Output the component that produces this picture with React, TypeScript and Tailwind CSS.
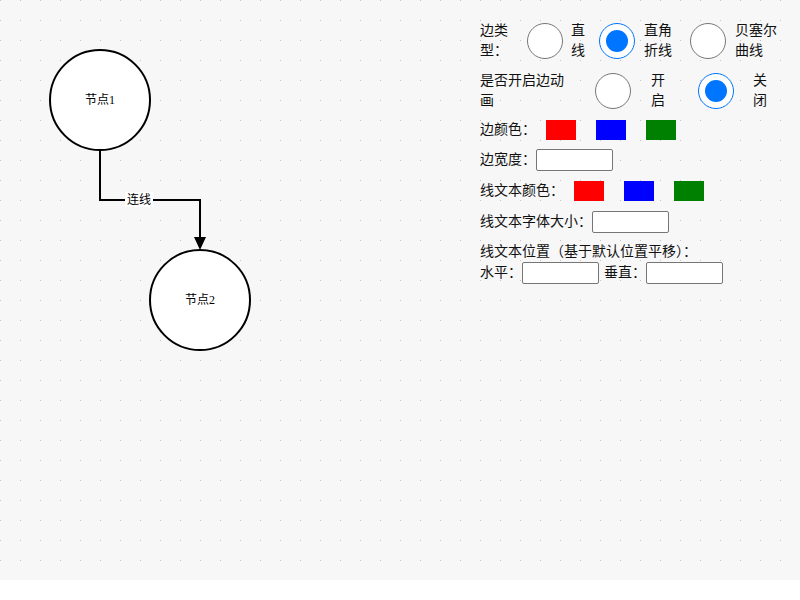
import React, { useState } from "react";

const colors = ["#ff0000", "#0000ff", "#008000"];

const Radio = ({ checked, onClick, className }: { checked: boolean; onClick: () => void; className?: string }) => (
    <div
        onClick={onClick}
        className={
            "w-[36px] h-[36px] shrink-0 rounded-full bg-white flex items-center justify-center cursor-pointer border " +
            (checked ? "border-[#0075ff] " : "border-[#767676] ") +
            (className || "")
        }
    >
        {checked && <div className="w-[22px] h-[22px] rounded-full bg-[#0075ff]"></div>}
    </div>
);

const Swatch = ({ color }: { color: string }) => (
    <div className="w-[30px] h-[20px] mx-[10px] shrink-0" style={{ backgroundColor: color }}></div>
);

const Field = ({ className }: { className?: string }) => (
    <input className={"w-[77px] h-[22px] bg-white border border-[#767676] rounded-[2px] px-1 text-[13px] outline-none " + (className || "")} />
);

const Diagram = () => (
    <svg className="absolute inset-0" width={800} height={580}>
        <defs>
            <pattern id="grid" width="20" height="20" patternUnits="userSpaceOnUse">
                <rect x="0" y="0" width="1" height="1" fill="#c4c4c4" />
            </pattern>
        </defs>
        <rect width="800" height="580" fill="url(#grid)" />
        <polyline points="100,150 100,200 200,200 200,237" fill="none" stroke="#000" strokeWidth={2} />
        <path d="M194,237 L206,237 L200,250 z" fill="#000" />
        <rect x="125" y="192" width="28" height="15" fill="#fff" />
        <text x="139" y="203.5" textAnchor="middle" fontSize="12" fill="#000" fontFamily="'Liberation Serif','Noto Sans CJK SC',serif">连线</text>
        <circle cx="100" cy="100" r="50" fill="#fff" stroke="#000" strokeWidth={2} />
        <text x="100" y="103.5" textAnchor="middle" fontSize="12" fill="#000" fontFamily="'Liberation Serif','Noto Sans CJK SC',serif">节点1</text>
        <circle cx="200" cy="300" r="50" fill="#fff" stroke="#000" strokeWidth={2} />
        <text x="200" y="303.5" textAnchor="middle" fontSize="12" fill="#000" fontFamily="'Liberation Serif','Noto Sans CJK SC',serif">节点2</text>
    </svg>
);

export default function App() {
    const [edgeType, setEdgeType] = useState("polyline");
    const [animate, setAnimate] = useState(false);

    return (
        <div className="w-[800px] h-[600px] bg-white" style={{ fontFamily: "'Liberation Serif','Noto Sans CJK SC',serif" }}>
            <div className="relative w-[800px] h-[580px] bg-[#f7f7f7] overflow-hidden">
                <Diagram />
                <div className="absolute left-[480px] top-[21px] flex flex-col text-[14px] leading-[20px] text-[#111]">
                    <div className="flex items-center h-[40px]">
                        <div className="w-[32px]">边类型：</div>
                        <Radio className="ml-[15px]" checked={edgeType === "line"} onClick={() => setEdgeType("line")} />
                        <div className="ml-[8px] w-[14px]">直线</div>
                        <Radio className="ml-[14px]" checked={edgeType === "polyline"} onClick={() => setEdgeType("polyline")} />
                        <div className="ml-[9px] w-[28px]">直角折线</div>
                        <Radio className="ml-[18px]" checked={edgeType === "bezier"} onClick={() => setEdgeType("bezier")} />
                        <div className="ml-[9px] w-[42px]">贝塞尔曲线</div>
                    </div>
                    <div className="flex items-center h-[40px] mt-[10px]">
                        <div className="w-[84px]">是否开启边动画</div>
                        <Radio className="ml-[31px]" checked={animate} onClick={() => setAnimate(true)} />
                        <div className="ml-[20px] w-[14px]">开启</div>
                        <Radio className="ml-[33px]" checked={!animate} onClick={() => setAnimate(false)} />
                        <div className="ml-[19px] w-[14px]">关闭</div>
                    </div>
                    <div className="flex items-center h-[20px] mt-[9px]">
                        <div>边颜色：</div>
                        {colors.map((c) => <Swatch key={c} color={c} />)}
                    </div>
                    <div className="flex items-center h-[22px] mt-[9px]">
                        <div>边宽度：</div>
                        <Field />
                    </div>
                    <div className="flex items-center h-[20px] mt-[10px]">
                        <div>线文本颜色：</div>
                        {colors.map((c) => <Swatch key={c} color={c} />)}
                    </div>
                    <div className="flex items-center h-[22px] mt-[10px]">
                        <div>线文本字体大小：</div>
                        <Field />
                    </div>
                    <div className="mt-[9px]">线文本位置（基于默认位置平移）：</div>
                    <div className="flex items-center h-[22px]">
                        <div>水平：</div>
                        <Field />
                        <div className="ml-[5px]">垂直：</div>
                        <Field />
                    </div>
                </div>
            </div>
        </div>
    );
}
